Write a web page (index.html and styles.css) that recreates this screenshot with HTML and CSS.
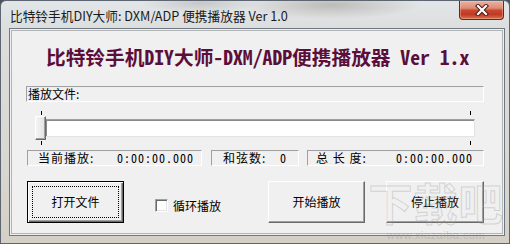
FILE: index.html
```html
<!DOCTYPE html>
<html lang="zh-CN">
<head>
<meta charset="utf-8">
<title>比特铃手机DIY大师: DXM/ADP 便携播放器 Ver 1.0</title>
<link rel="stylesheet" href="styles.css">
</head>
<body>
<div class="window">
  <div class="titlebar">
    <span class="title">比特铃手机DIY大师: DXM/ADP 便携播放器 Ver 1.0</span>
    <div class="close">
      <svg width="14" height="12" viewBox="0 0 14 12">
        <path d="M3 2 L11 10 M11 2 L3 10" stroke="#4b1c16" stroke-width="4.2" stroke-linecap="square" fill="none"/>
        <path d="M3 2 L11 10 M11 2 L3 10" stroke="#ffffff" stroke-width="2.2" stroke-linecap="square" fill="none"/>
      </svg>
    </div>
  </div>
  <div class="client">
    <div class="panel">
      <h1 class="heading">比特铃手机DIY大师-DXM/ADP便携播放器 Ver 1.x</h1>
      <div class="filebox">播放文件:</div>
      <div class="slider">
        <span class="tick tick-top tick-left"></span>
        <span class="tick tick-top tick-right"></span>
        <span class="tick tick-bottom tick-left"></span>
        <span class="tick tick-bottom tick-right"></span>
        <div class="track"></div>
        <div class="thumb"></div>
      </div>
      <div class="status">
        <div class="sbox s1"><span class="lbl">当前播放:</span><span class="num">0:00:00.000</span></div>
        <div class="sbox s2"><span class="lbl">和弦数:</span><span class="num">0</span></div>
        <div class="sbox s3"><span class="lbl">总 长 度:</span><span class="num">0:00:00.000</span></div>
      </div>
      <div class="buttons">
        <div class="btn btn-default"><span class="focus">打开文件</span></div>
        <div class="check"><span class="box"></span><span class="check-label">循环播放</span></div>
        <div class="btn btn-play">开始播放</div>
        <div class="btn btn-stop">停止播放</div>
      </div>
    </div>
  </div>
  <div class="watermark">
    <span class="wm-logo">下载吧</span>
    <span class="wm-url">www.xiazaiba.com</span>
  </div>
</div>
</body>
</html>
```

FILE: styles.css
```css
* { box-sizing: border-box; }
html, body { margin: 0; padding: 0; }
body {
  width: 510px;
  height: 244px;
  overflow: hidden;
  background: #4b535c;
  font-family: "Noto Sans CJK SC", "Liberation Sans", sans-serif;
}
.window {
  position: relative;
  width: 510px;
  height: 244px;
  padding: 0 6px 7px 8px;
  display: flex;
  flex-direction: column;
  border: 1px solid #5d6670;
  border-radius: 6px 6px 0 0;
  background:
    radial-gradient(ellipse 90px 14px at 330px 4px, rgba(120,110,100,0.35), rgba(120,110,100,0) 100%),
    radial-gradient(ellipse 60px 10px at 200px 2px, rgba(130,130,130,0.3), rgba(130,130,130,0) 100%),
    linear-gradient(180deg, #e3e6e8 0%, #dcdedd 12%, #d9d8d3 60%, #d4d0c6 100%);
}
.titlebar {
  height: 28px;
  display: flex;
  align-items: flex-start;
  margin-left: -1px;
  margin-right: -1px;
}
.title {
  padding: 8px 0 0 2px;
  font-size: 12.7px;
  line-height: 14px;
  color: #1b1b1b;
  white-space: nowrap;
}
.close {
  margin-left: auto;
  width: 45px;
  height: 19px;
  display: flex;
  align-items: center;
  justify-content: center;
  border: 1px solid #6e241a;
  border-top: none;
  border-radius: 0 0 4px 4px;
  background: linear-gradient(180deg, #eab3a4 0%, #dd8a74 40%, #c9472f 52%, #c03a24 75%, #d9744f 100%);
  box-shadow: inset 0 0 0 1px rgba(255,220,200,0.35);
}
.client {
  width: 496px;
  height: 208px;
  border: 1px solid #6c7884;
  padding: 1px;
  background: #f0f0f0;
}
.panel {
  width: 492px;
  height: 204px;
  border: 1px solid #b4b4b4;
  background: #f0f0f0;
  display: flex;
  flex-direction: column;
  align-items: flex-start;
}
.heading {
  margin: 16px 0 0 34px;
  font-family: "Noto Sans Mono CJK SC", "Noto Sans CJK SC", "DejaVu Sans Mono", monospace;
  font-size: 19.7px;
  line-height: 20px;
  font-weight: bold;
  color: #5b0e3a;
  white-space: pre;
}
.filebox {
  margin: 19px 0 0 14px;
  width: 458px;
  height: 16px;
  padding-left: 1px;
  border-top: 1px solid #a0a0a0;
  border-left: 1px solid #a0a0a0;
  border-right: 1px solid #ffffff;
  border-bottom: 1px solid #ffffff;
  font-size: 12px;
  line-height: 14px;
  color: #000;
}
.slider {
  position: relative;
  margin: 9px 0 0 23px;
  width: 440px;
  height: 35px;
}
.tick {
  position: absolute;
  width: 1px;
  height: 4px;
  background: #000;
}
.tick-top { top: 0; }
.tick-bottom { top: 30px; }
.tick-left { left: 6px; }
.tick-right { left: 435px; }
.track {
  margin: 8px 0 0 10px;
  width: 430px;
  height: 18px;
  background: #ffffff;
  border-top: 1px solid #a0a0a0;
  border-left: 1px solid #a0a0a0;
  border-right: 1px solid #e3e3e3;
  border-bottom: 1px solid #e3e3e3;
  box-shadow: inset 1px 1px 0 #8a8a8a;
}
.thumb {
  position: absolute;
  left: 0;
  top: 5px;
  width: 11px;
  height: 24px;
  background: linear-gradient(90deg, #f4f4f4, #e2e2e2);
  border-top: 1px solid #ffffff;
  border-left: 1px solid #ffffff;
  border-right: 1px solid #696969;
  border-bottom: 1px solid #696969;
  box-shadow: inset -1px -1px 0 #a0a0a0;
}
.status {
  margin: 4px 0 0 15px;
  display: flex;
  height: 16px;
}
.sbox {
  height: 16px;
  display: flex;
  justify-content: space-between;
  align-items: center;
  border-top: 1px solid #a0a0a0;
  border-left: 1px solid #a0a0a0;
  border-right: 1px solid #ffffff;
  border-bottom: 1px solid #ffffff;
  font-size: 12px;
  line-height: 14px;
  color: #000;
  white-space: pre;
}
.sbox .lbl { letter-spacing: 1px; }
.sbox .num {
  font-family: "Noto Sans Mono CJK SC", "DejaVu Sans Mono", monospace;
  letter-spacing: 1px;
}
.s1 { width: 175px; padding: 0 7px 0 10px; }
.s2 { width: 88px; margin-left: 9px; padding: 0 11px 0 11px; }
.s3 { width: 177px; margin-left: 8px; padding: 0 10px 0 8px; }
.buttons {
  margin: 15px 0 0 15px;
  display: flex;
  align-items: center;
  height: 42px;
}
.btn {
  height: 42px;
  display: flex;
  align-items: center;
  justify-content: center;
  background: #f0f0f0;
  font-size: 12px;
  line-height: 14px;
  color: #000;
  border-top: 1px solid #ffffff;
  border-left: 1px solid #ffffff;
  border-right: 1px solid #696969;
  border-bottom: 1px solid #696969;
  box-shadow: inset -1px -1px 0 #a0a0a0;
}
.btn-default {
  width: 97px;
  border: 1px solid #000;
  box-shadow: inset 1px 1px 0 #ffffff, inset -1px -1px 0 #696969, inset -2px -2px 0 #a0a0a0;
  padding: 4px;
}
.focus {
  flex: 1;
  align-self: stretch;
  display: flex;
  align-items: center;
  justify-content: center;
  border: 1px dotted #000;
}
.check {
  width: 113px;
  margin-left: 31px;
  display: flex;
  align-items: center;
  padding-top: 7px;
}
.box {
  width: 13px;
  height: 13px;
  background: #fff;
  border-top: 1px solid #a0a0a0;
  border-left: 1px solid #a0a0a0;
  border-right: 1px solid #ffffff;
  border-bottom: 1px solid #ffffff;
  box-shadow: inset 1px 1px 0 #696969, inset -1px -1px 0 #e3e3e3;
}
.check-label {
  margin-left: 5px;
  font-size: 12px;
  line-height: 14px;
  color: #000;
}
.btn-play { width: 97px; }
.btn-stop { width: 98px; margin-left: 21px; }
.watermark {
  position: absolute;
  left: 362px;
  top: 178px;
  width: 146px;
  height: 64px;
  pointer-events: none;
  display: flex;
  flex-direction: column;
  align-items: center;
}
.wm-logo {
  font-size: 44px;
  line-height: 46px;
  font-weight: bold;
  color: rgba(255,255,255,0.08);
  -webkit-text-stroke: 1px rgba(150,150,150,0.35);
  letter-spacing: 1px;
}
.wm-url {
  margin-top: 4px;
  font-family: "Liberation Sans", sans-serif;
  font-size: 11px;
  line-height: 12px;
  color: rgba(150,150,150,0.4);
  letter-spacing: 0.5px;
}
```
